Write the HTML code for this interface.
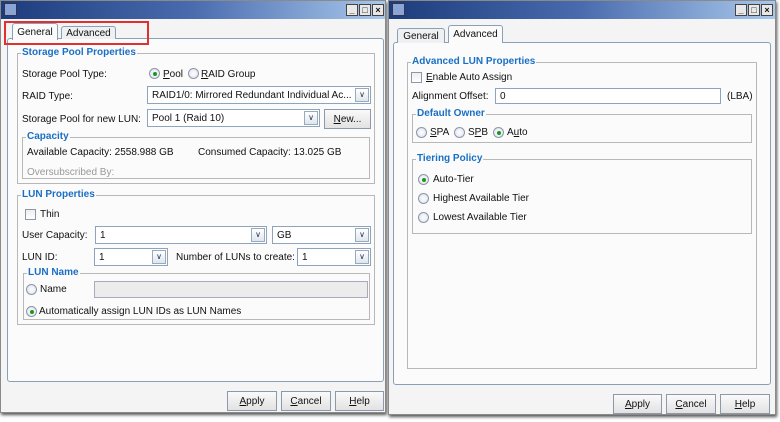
<!DOCTYPE html>
<html><head><style>
*{box-sizing:border-box;margin:0;padding:0}
body{width:780px;height:422px;background:#fff;position:relative;overflow:hidden;font-family:"Liberation Sans",sans-serif;font-size:10px;color:#111}
.a{position:absolute;white-space:nowrap;padding-top:1px}
.win{position:absolute;background:#f4f4f4;border:1px solid #8a8a8a;box-shadow:1px 2px 3px #555}
.title{position:absolute;left:0;right:0;top:0;height:18px;background:linear-gradient(90deg,#1c3c7c,#4a6cae 50%,#a9c8ec)}
.tb{position:absolute;top:3px;width:12px;height:12px;background:#e8e8e8;border:1px solid #444;font-size:9px;line-height:10px;text-align:center;font-weight:bold}
.panel{position:absolute;background:#fbfbfb;border:1px solid #8aa0b8;border-radius:3px}
.grp{position:absolute;border:1px solid #b8b8b8}
.gt{position:absolute;top:-7px;left:3px;background:#fbfbfb;color:#1a6fc4;font-weight:bold;font-size:10px;padding:0 1px;line-height:12px}
.inp{position:absolute;background:#fff;border:1px solid #8ea4bc;height:18px;padding:3px 4px;line-height:11px;overflow:hidden}
.dd{position:absolute;right:1px;top:1px;width:14px;height:14px;border:1px solid #9ab;background:linear-gradient(#fff,#dde6ee);font-size:8px;text-align:center;line-height:12px;color:#335}
.btn{position:absolute;height:20px;border:1px solid #8a9aaa;background:linear-gradient(#fafafa,#e2e2e2);text-align:center;line-height:19px}
.rb{position:absolute;width:11px;height:11px;border-radius:50%;border:1px solid #8a98a8;background:radial-gradient(#fff,#dde)}
.rb.on::after{content:"";position:absolute;left:3px;top:3px;width:4px;height:4px;border-radius:50%;background:#1a9a1a}
.cb{position:absolute;width:11px;height:11px;border:1px solid #8a98a8;background:linear-gradient(#eee,#fff)}
.tab{position:absolute;border:1px solid #8aa0b8;border-bottom:none;border-radius:3px 3px 0 0;background:#eef0f2;text-align:center;padding-top:3px}
u{text-decoration:underline}
</style></head><body>

<div class="win" style="left:0;top:0;width:386px;height:413px">
 <div class="title"><div style="position:absolute;left:3px;top:2px;width:13px;height:13px;background:#8aa4d4;border:1px solid #335"></div>
 <div class="tb" style="left:345px">_</div><div class="tb" style="left:358px">□</div><div class="tb" style="left:371px">×</div></div>
 <div class="panel" style="left:6px;top:37px;width:377px;height:344px"></div>
 <div class="tab" style="left:11px;top:22px;width:46px;height:17px;background:#fbfbfb">General</div>
 <div class="tab" style="left:60px;top:25px;width:55px;height:13px;padding-top:1px">Advanced</div>
 <div class="a" style="left:3px;top:20px;width:145px;height:24px;border:2px solid #e03030"></div>

 <div class="grp" style="left:16px;top:52px;width:358px;height:131px"><div class="gt">Storage Pool Properties</div></div>
 <div class="a" style="left:21px;top:67px">Storage Pool Type:</div>
 <div class="rb on" style="left:148px;top:67px"></div><div class="a" style="left:162px;top:67px"><u>P</u>ool</div>
 <div class="rb" style="left:187px;top:67px"></div><div class="a" style="left:200px;top:67px"><u>R</u>AID Group</div>
 <div class="a" style="left:21px;top:89px">RAID Type:</div>
 <div class="inp" style="left:146px;top:85px;width:224px">RAID1/0: Mirrored Redundant Individual Ac...<div class="dd">∨</div></div>
 <div class="a" style="left:21px;top:112px">Storage Pool for new LUN:</div>
 <div class="inp" style="left:146px;top:108px;width:173px">Pool 1 (Raid 10)<div class="dd">∨</div></div>
 <div class="btn" style="left:323px;top:108px;width:47px"><u>N</u>ew...</div>
 <div class="grp" style="left:21px;top:136px;width:348px;height:42px"><div class="gt">Capacity</div></div>
 <div class="a" style="left:26px;top:145px">Available Capacity: 2558.988 GB</div>
 <div class="a" style="left:197px;top:145px">Consumed Capacity: 13.025 GB</div>
 <div class="a" style="left:26px;top:165px;color:#999">Oversubscribed By:</div>

 <div class="grp" style="left:16px;top:194px;width:358px;height:130px"><div class="gt">LUN Properties</div></div>
 <div class="cb" style="left:24px;top:208px"></div><div class="a" style="left:39px;top:207px">Thin</div>
 <div class="a" style="left:21px;top:228px">User Capacity:</div>
 <div class="inp" style="left:94px;top:225px;width:172px">1<div class="dd">∨</div></div>
 <div class="inp" style="left:271px;top:225px;width:99px">GB<div class="dd">∨</div></div>
 <div class="a" style="left:21px;top:250px">LUN ID:</div>
 <div class="inp" style="left:93px;top:247px;width:74px">1<div class="dd">∨</div></div>
 <div class="a" style="left:175px;top:250px">Number of LUNs to create:</div>
 <div class="inp" style="left:296px;top:247px;width:74px">1<div class="dd">∨</div></div>
 <div class="grp" style="left:22px;top:272px;width:347px;height:47px"><div class="gt">LUN Name</div></div>
 <div class="rb" style="left:25px;top:283px"></div><div class="a" style="left:39px;top:282px">Name</div>
 <div class="inp" style="left:93px;top:280px;width:274px;height:17px;background:#ececec;border-color:#aab"></div>
 <div class="rb on" style="left:25px;top:305px"></div><div class="a" style="left:38px;top:304px">Automatically assign LUN IDs as LUN Names</div>

 <div class="btn" style="left:226px;top:390px;width:50px"><u>A</u>pply</div>
 <div class="btn" style="left:280px;top:390px;width:50px"><u>C</u>ancel</div>
 <div class="btn" style="left:334px;top:390px;width:49px"><u>H</u>elp</div>
</div>

<div class="win" style="left:388px;top:0;width:388px;height:415px">
 <div class="title"><div style="position:absolute;left:3px;top:2px;width:13px;height:13px;background:#8aa4d4;border:1px solid #335"></div>
 <div class="tb" style="left:346px">_</div><div class="tb" style="left:359px">□</div><div class="tb" style="left:372px">×</div></div>
 <div class="panel" style="left:4px;top:41px;width:378px;height:343px"></div>
 <div class="tab" style="left:8px;top:27px;width:48px;height:15px;padding-top:2px">General</div>
 <div class="tab" style="left:59px;top:24px;width:55px;height:18px;background:#fbfbfb">Advanced</div>

 <div class="grp" style="left:18px;top:61px;width:350px;height:307px"><div class="gt">Advanced LUN Properties</div></div>
 <div class="cb" style="left:22px;top:71px"></div><div class="a" style="left:37px;top:70px"><u>E</u>nable Auto Assign</div>
 <div class="a" style="left:23px;top:89px">Alignment Offset:</div>
 <div class="inp" style="left:106px;top:87px;width:226px;height:16px;padding-top:2px">0</div>
 <div class="a" style="left:338px;top:89px">(LBA)</div>
 <div class="grp" style="left:23px;top:113px;width:340px;height:29px"><div class="gt">Default Owner</div></div>
 <div class="rb" style="left:27px;top:126px"></div><div class="a" style="left:41px;top:125px"><u>S</u>PA</div>
 <div class="rb" style="left:65px;top:126px"></div><div class="a" style="left:79px;top:125px">S<u>P</u>B</div>
 <div class="rb on" style="left:104px;top:126px"></div><div class="a" style="left:118px;top:125px">A<u>u</u>to</div>
 <div class="grp" style="left:23px;top:158px;width:340px;height:75px"><div class="gt">Tiering Policy</div></div>
 <div class="rb on" style="left:29px;top:173px"></div><div class="a" style="left:44px;top:172px">Auto-Tier</div>
 <div class="rb" style="left:29px;top:192px"></div><div class="a" style="left:44px;top:191px">Highest Available Tier</div>
 <div class="rb" style="left:29px;top:211px"></div><div class="a" style="left:44px;top:210px">Lowest Available Tier</div>

 <div class="btn" style="left:224px;top:393px;width:49px"><u>A</u>pply</div>
 <div class="btn" style="left:277px;top:393px;width:50px"><u>C</u>ancel</div>
 <div class="btn" style="left:331px;top:393px;width:50px"><u>H</u>elp</div>
</div>
</body></html>
